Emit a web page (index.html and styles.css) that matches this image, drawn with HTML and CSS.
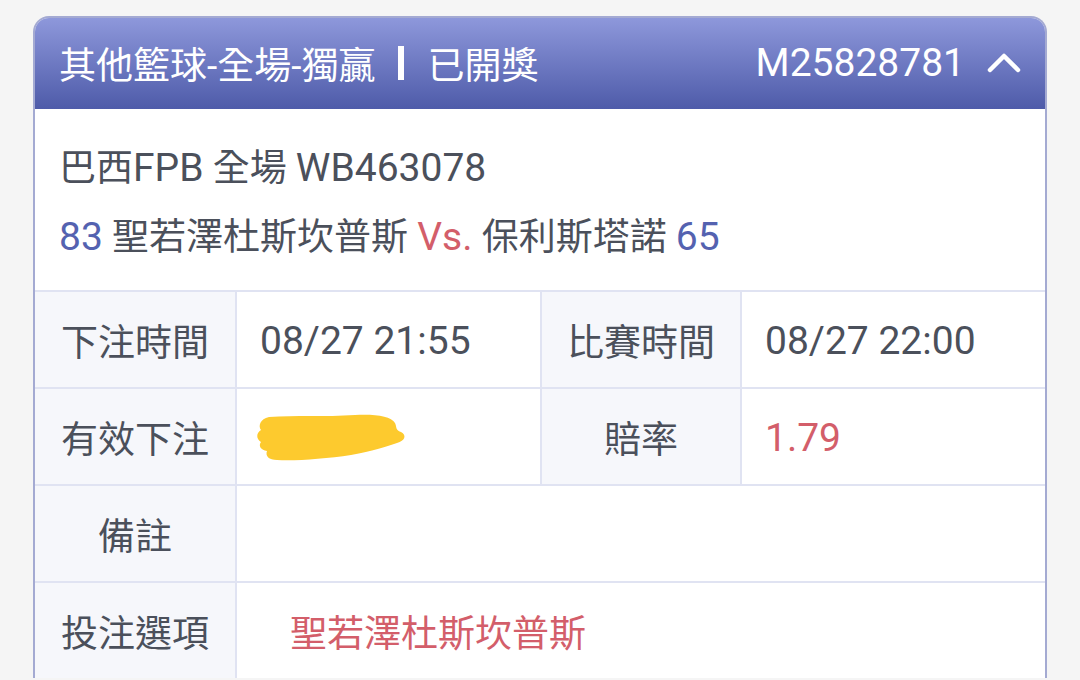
FILE: index.html
```html
<!DOCTYPE html>
<html lang="zh-Hant">
<head>
    <meta charset="UTF-8">
    <meta name="viewport" content="width=device-width, initial-scale=1.0">
    <title>注單詳情</title>
    <link rel="stylesheet" href="styles.css">
</head>
<body>
    <div class="card">
        <div class="card-head">
            <div class="head-title">
                <span>其他籃球-全場-獨贏</span>
                <span class="bar"></span>
                <span>已開獎</span>
            </div>
            <div class="head-right">
                <span class="en">M25828781</span>
                <svg class="chevron" width="34" height="22" viewBox="0 0 34 22">
                    <path d="M3 19 L17 5 L31 19" fill="none" stroke="#fff" stroke-width="4.5" stroke-linecap="round" stroke-linejoin="round"/>
                </svg>
            </div>
        </div>

        <div class="match">
            <div class="match-line">巴西<span class="en">FPB</span> 全場 <span class="en">WB463078</span></div>
            <div class="match-line">
                <span class="score en">83</span> 聖若澤杜斯坎普斯 <span class="vs en">Vs.</span> 保利斯塔諾 <span class="score en">65</span>
            </div>
        </div>

        <div class="info">
            <div class="cell label">下注時間</div>
            <div class="cell en">08/27 21:55</div>
            <div class="cell label">比賽時間</div>
            <div class="cell en">08/27 22:00</div>

            <div class="cell label">有效下注</div>
            <div class="cell">
                <!-- 金額已塗抹 -->
                <svg class="scribble" width="152" height="50" viewBox="0 0 152 50">
                    <path d="M14 4 C40 2 70 4 100 2 C120 1 136 3 140 10 C142 14 140 17 146 19 C152 22 150 28 142 30 C130 34 118 38 96 42 C70 46 40 48 22 47 C14 47 10 43 12 38 C6 37 3 33 6 29 C1 26 1 20 6 17 C3 13 5 6 14 4 Z" fill="#fdca2e"/>
                </svg>
            </div>
            <div class="cell label">賠率</div>
            <div class="cell red en">1.79</div>

            <div class="cell label">備註</div>
            <div class="cell wide"></div>

            <div class="cell label">投注選項</div>
            <div class="cell wide red pick">聖若澤杜斯坎普斯</div>
        </div>
    </div>
</body>
</html>
```

FILE: styles.css
```css
body {
    margin: 0;
    padding: 16px 33px 0;
    background-color: #f5f5f5;
    font-family: Roboto, "Noto Sans CJK TC", sans-serif;
    color: #4b505b;
}
.en {
    font-size: 39px;
}
.card {
    background-color: #fff;
    border: 2px solid #a4aad2;
    border-bottom: none;
    border-radius: 16px 16px 0 0;
    overflow: hidden;
}
.card-head {
    height: 93px;
    margin: -2px -2px 0;
    padding: 0 26px 0 26px;
    display: flex;
    align-items: center;
    justify-content: space-between;
    background: linear-gradient(to bottom, #8f99dc, #4e5ba9);
    color: #fff;
    font-size: 37px;
}
.head-title {
    display: flex;
    align-items: center;
    gap: 23px;
}
.head-title .bar {
    width: 6px;
    height: 34px;
    background-color: #fff;
}
.head-right {
    display: flex;
    align-items: center;
    gap: 22px;
}
.chevron {
    display: block;
    margin-top: -2px;
}
.match {
    padding: 25px 24px 18px;
    font-size: 37px;
}
.match-line {
    line-height: 68px;
}
.score {
    color: #5462b0;
}
.vs {
    color: #d35e6a;
}
.info {
    display: grid;
    grid-template-columns: 200px 303px 198px 1fr;
    grid-auto-rows: 95px;
    gap: 2px;
    background-color: #e0e3f2;
    border-top: 2px solid #e0e3f2;
}
.cell {
    display: flex;
    align-items: center;
    padding: 0 23px;
    background-color: #fff;
    font-size: 37px;
}
.cell.en {
    font-size: 39px;
    padding-top: 3px;
}
.cell.label {
    justify-content: center;
    padding: 0;
    background-color: #f6f7fb;
}
.cell.wide {
    grid-column: span 3;
}
.red {
    color: #d35e6a;
}
.pick {
    padding-left: 53px;
}
.scribble {
    display: block;
    margin: 2px 0 0 -5px;
}
```
